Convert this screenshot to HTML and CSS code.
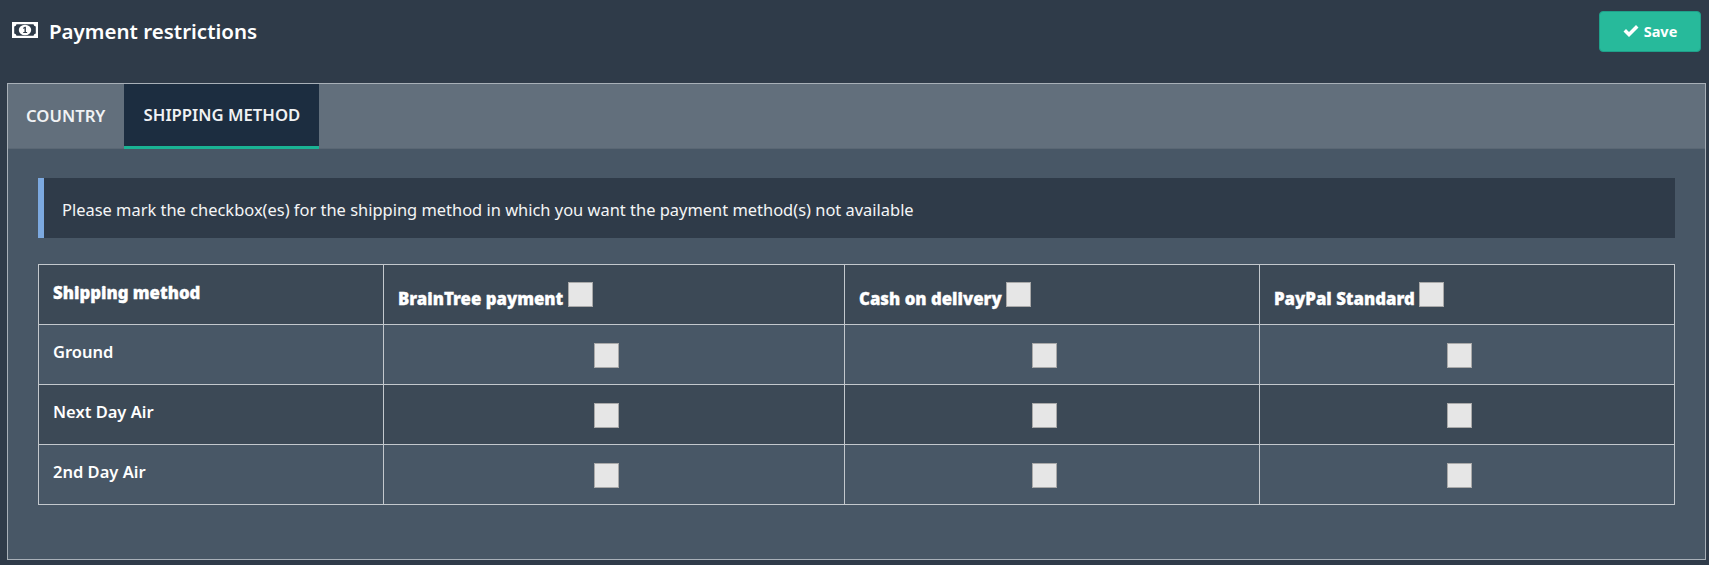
FILE: index.html
```html
<!DOCTYPE html>
<html lang="en">
<head>
<meta charset="utf-8">
<title>Payment restrictions</title>
<link rel="stylesheet" href="styles.css">
</head>
<body>
<header class="page-header">
  <h1 class="page-title">
    <svg class="title-icon" viewBox="0 0 26 18" aria-hidden="true">
      <path fill-rule="evenodd" fill="#fff" d="M0 1h26v16H0zM4.5 3.2a2.6 2.6 0 0 1-2.3 2.3v7a2.6 2.6 0 0 1 2.3 2.3h17a2.6 2.6 0 0 1 2.3-2.3v-7a2.6 2.6 0 0 1-2.3-2.3z"/>
      <ellipse cx="13" cy="9" rx="6.2" ry="5.2" fill="#fff"/>
      <path fill="#2f3b49" d="M11.2 12v-1.1h1.3V7.2l-1.3.8v-1.2l1.6-1h1.1v5.1h1.2V12z"/>
    </svg>
    <span>Payment restrictions</span>
  </h1>
  <button class="save-btn" type="button">
    <svg class="save-icon" viewBox="0 0 16 14" aria-hidden="true">
      <path fill="#fff" d="M0.5 7.4 3 4.9 6 7.9 13 0.9 15.5 3.4 6 12.9z"/>
    </svg>
    Save
  </button>
</header>
<main class="panel">
  <nav class="tabs">
    <a class="tab">COUNTRY</a>
    <a class="tab tab-active">SHIPPING METHOD</a>
  </nav>
  <section class="panel-body">
    <p class="notice">Please mark the checkbox(es) for the shipping method in which you want the payment method(s) not available</p>
    <table class="grid">
      <colgroup>
        <col class="col-a"><col class="col-b"><col class="col-c"><col class="col-d">
      </colgroup>
      <thead>
        <tr>
          <th class="th-first">Shipping method</th>
          <th>BrainTree payment <input class="check check-head" type="checkbox"></th>
          <th>Cash on delivery <input class="check check-head" type="checkbox"></th>
          <th>PayPal Standard <input class="check check-head" type="checkbox"></th>
        </tr>
      </thead>
      <tbody>
        <tr>
          <td class="name">Ground</td>
          <td class="mid"><input class="check" type="checkbox"></td>
          <td class="mid"><input class="check" type="checkbox"></td>
          <td class="mid"><input class="check" type="checkbox"></td>
        </tr>
        <tr class="alt">
          <td class="name">Next Day Air</td>
          <td class="mid"><input class="check" type="checkbox"></td>
          <td class="mid"><input class="check" type="checkbox"></td>
          <td class="mid"><input class="check" type="checkbox"></td>
        </tr>
        <tr>
          <td class="name">2nd Day Air</td>
          <td class="mid"><input class="check" type="checkbox"></td>
          <td class="mid"><input class="check" type="checkbox"></td>
          <td class="mid"><input class="check" type="checkbox"></td>
        </tr>
      </tbody>
    </table>
  </section>
</main>
</body>
</html>
```
FILE: styles.css
```css
* { box-sizing: border-box; }
html, body { height: 100%; }
body {
  margin: 0;
  background: #2f3b49;
  color: #fff;
  font-family: "Noto Sans", "Open Sans", sans-serif;
  overflow: hidden;
}
.page-header {
  height: 83px;
  display: flex;
  justify-content: space-between;
  align-items: flex-start;
  padding: 11px 8px 0 12px;
}
.page-title {
  margin: 7px 0 0;
  display: flex;
  align-items: center;
  gap: 11px;
  font-size: 20.5px;
  line-height: 27px;
  font-weight: 600;
}
.title-icon { width: 26px; height: 18px; margin-top: -3px; }
.save-btn {
  width: 102px;
  height: 41px;
  display: flex;
  align-items: center;
  justify-content: center;
  gap: 5px;
  padding: 0 0 2px;
  background: #27ba9b;
  border: 1px solid #1fa08a;
  border-radius: 4px;
  color: #fff;
  font: 700 14.5px "Noto Sans", sans-serif;
}
.save-icon { width: 16px; height: 14px; }
.panel {
  margin: 0 3px 0 7px;
  height: 477px;
  border: 1px solid #a8b0b8;
  background: #485766;
}
.tabs {
  height: 65px;
  display: flex;
  background: #626f7c;
  border-bottom: 1px solid #5a6774;
}
.tab {
  display: flex;
  align-items: center;
  padding: 0 19px 2px 18px;
  font-size: 16.7px;
  font-weight: 600;
  color: #f0f2f4;
}
.tab-active {
  width: 195px;
  justify-content: center;
  padding: 0 0 2px;
  background: #1c2d40;
  border-bottom: 3px solid #1ab394;
  margin-bottom: -1px;
}
.panel-body { padding: 29px 30px 0; }
.notice {
  margin: 0 0 26px;
  height: 60px;
  display: flex;
  align-items: center;
  padding: 3px 0 0 18px;
  background: #2f3b49;
  border-left: 6px solid #7ca9e0;
  font-size: 16.45px;
  color: #f4f5f6;
}
.grid {
  width: 100%;
  border-collapse: collapse;
  table-layout: fixed;
}
.col-a { width: 345px; }
.col-b { width: 461px; }
.col-c { width: 415px; }
.grid th, .grid td {
  height: 60px;
  padding: 0 14px;
  border: 1px solid #c3c8cd;
  text-align: left;
}
.grid thead, .alt { background: #3c4956; }
.grid th {
  font-size: 16.8px;
  font-weight: 900;
  -webkit-text-stroke: 0.3px #fff;
  padding-top: 7px;
}
.grid .th-first { padding-top: 0; padding-bottom: 4px; }
.grid .name { font-size: 16.5px; font-weight: 600; padding-bottom: 6px; }
.grid .mid { text-align: center; padding: 0 30px 0 15px; }
.check {
  appearance: none;
  -webkit-appearance: none;
  width: 25px;
  height: 25px;
  margin: 2px 0 0;
  vertical-align: middle;
  background: #e6e6e6;
  border: 1px solid #a9a9a9;
  border-radius: 0;
}
.check-head { margin: -10px 0 0; }
```
